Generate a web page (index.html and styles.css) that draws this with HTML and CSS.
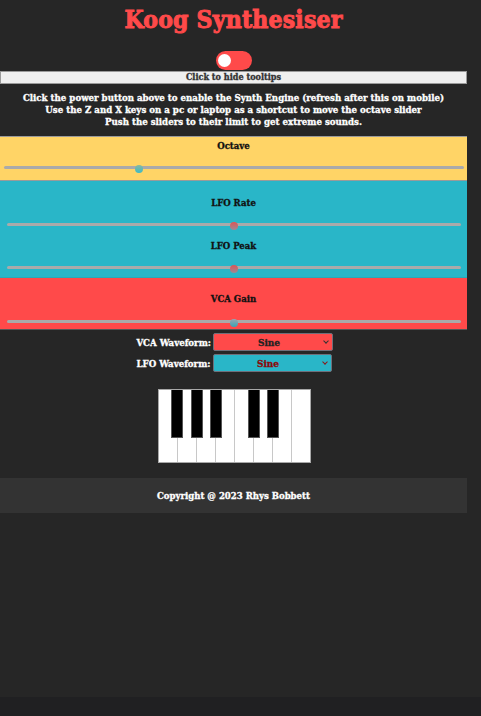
FILE: index.html
```html
<!DOCTYPE html>
<html lang="en">
<head>
<meta charset="utf-8">
<title>Koog Synthesiser</title>
<link rel="stylesheet" href="styles.css">
</head>
<body>
<div class="page">
  <h1 class="title">Koog Synthesiser</h1>
  <div class="power-row">
    <span class="toggle"><span class="knob"></span></span>
  </div>
  <button class="tooltip-btn">Click to hide tooltips</button>
  <div class="instructions">
    <p>Click the power button above to enable the Synth Engine (refresh after this on mobile)</p>
    <p>Use the Z and X keys on a pc or laptop as a shortcut to move the octave slider</p>
    <p>Push the sliders to their limit to get extreme sounds.</p>
  </div>

  <section class="panel octave">
    <div class="label">Octave</div>
    <input class="slider slider-oct" type="range" min="0" max="100" value="29">
  </section>

  <section class="panel lfo">
    <div class="label label-lfo1">LFO Rate</div>
    <input class="slider slider-red s1" type="range" min="0" max="100" value="50">
    <div class="label label-lfo2">LFO Peak</div>
    <input class="slider slider-red s2" type="range" min="0" max="100" value="50">
  </section>

  <section class="panel vca">
    <div class="label label-vca">VCA Gain</div>
    <input class="slider slider-teal" type="range" min="0" max="100" value="50">
  </section>

  <div class="selects">
    <div class="sel-row row1">
      <label class="sel-label">VCA Waveform:</label>
      <span class="sel-wrap sel-red"><select class="sel"><option>Sine</option></select></span>
    </div>
    <div class="sel-row row2">
      <label class="sel-label">LFO Waveform:</label>
      <span class="sel-wrap sel-teal"><select class="sel"><option>Sine</option></select></span>
    </div>
  </div>

  <div class="piano-row">
    <div class="piano">
      <div class="white"></div><div class="white"></div><div class="white"></div><div class="white"></div>
      <div class="white"></div><div class="white"></div><div class="white"></div><div class="white"></div>
      <div class="black b1"></div><div class="black b2"></div><div class="black b3"></div>
      <div class="black b4"></div><div class="black b5"></div>
    </div>
  </div>

  <footer class="footer">Copyright @ 2023 Rhys Bobbett</footer>
</div>
</body>
</html>
```
FILE: styles.css
```css
html {
  background: #202022;
}
body {
  margin: 0;
  background: #262626;
  min-height: 697px;
  font-family: "DejaVu Serif", "Liberation Serif", serif;
  font-weight: bold;
  font-stretch: condensed;
}
.page {
  width: 467px;
  display: flex;
  flex-direction: column;
}
.title {
  margin: 0;
  padding-top: 6px;
  height: 51px;
  box-sizing: border-box;
  text-align: center;
  color: #ff4a4a;
  font-size: 24.5px;
  line-height: 28px;
  letter-spacing: 0.2px;
  -webkit-text-stroke: 0.9px #ff4a4a;
}
.power-row {
  display: flex;
  justify-content: center;
  padding-left: 1px;
  height: 20px;
}
.toggle {
  width: 36px;
  height: 19px;
  border-radius: 10px;
  background: #ff4a4a;
  display: flex;
  align-items: center;
  padding-left: 2px;
  box-sizing: border-box;
}
.knob {
  width: 13px;
  height: 13px;
  border-radius: 50%;
  background: #fff;
}
.tooltip-btn {
  margin: 0;
  width: 467px;
  height: 13px;
  padding: 0;
  border: 1px solid #9a9a9a;
  background: #efefef;
  color: #333;
  font-family: inherit;
  font-weight: bold;
  font-stretch: condensed;
  font-size: 9px;
  line-height: 11px;
  -webkit-text-stroke: 0.3px #333;
}
.instructions {
  padding-top: 8px;
  height: 52px;
  box-sizing: border-box;
  color: #fff;
  text-align: center;
  font-size: 9.6px;
  line-height: 12px;
  -webkit-text-stroke: 0.3px #fff;
}
.instructions p {
  margin: 0;
}
.panel {
  display: flex;
  flex-direction: column;
  align-items: stretch;
  border-top: 1px solid #9a9a9a;
}
.label {
  text-align: center;
  color: #111;
  font-size: 9.5px;
  line-height: 12px;
  -webkit-text-stroke: 0.3px #111;
}
.octave {
  background: #ffd466;
  height: 44px;
  box-sizing: border-box;
  padding-top: 3px;
}
.lfo {
  background: #29b6c8;
  height: 97px;
  box-sizing: border-box;
  padding-top: 16px;
}
.label-lfo2 {
  margin-top: 11px;
}
.vca {
  background: #ff4a4a;
  height: 53px;
  box-sizing: border-box;
  padding-top: 15px;
  border-top: 1px solid #2aa8b8;
  border-bottom: 1px solid #555;
}
.slider {
  -webkit-appearance: none;
  appearance: none;
  background: transparent;
  height: 10px;
  margin: 0;
}
.slider-oct {
  margin: 10px 3px 0 4px;
}
.slider-red, .slider-teal {
  margin: 11px 6px 0 7px;
}
.s1 {
  margin-top: 10px;
}
.s2 {
  margin-top: 10px;
}
.slider::-webkit-slider-runnable-track {
  height: 3px;
  background: #aaaaaa;
  border-radius: 2px;
}
.slider::-webkit-slider-thumb {
  -webkit-appearance: none;
  width: 8px;
  height: 8px;
  border-radius: 50%;
  margin-top: -1px;
}
.slider-oct::-webkit-slider-thumb {
  background: linear-gradient(#8ab8a0, #3bbac6);
}
.slider-red::-webkit-slider-thumb {
  background: linear-gradient(#e05454, #9a8a96);
}
.slider-teal::-webkit-slider-thumb {
  background: linear-gradient(#9aa4b0, #3aa4b4);
}
.selects {
  display: flex;
  flex-direction: column;
  padding-top: 3px;
  gap: 3px;
}
.sel-row {
  display: flex;
  justify-content: center;
  align-items: center;
  gap: 2px;
}
.row1 {
  padding-right: 3px;
}
.row2 {
  padding-right: 5px;
}
.sel-label {
  color: #fff;
  font-size: 9.6px;
  width: 80px;
  text-align: right;
  -webkit-text-stroke: 0.3px #fff;
}
.sel-wrap {
  position: relative;
  display: block;
}
.sel {
  -webkit-appearance: none;
  appearance: none;
  display: block;
  width: 120px;
  height: 18px;
  border: 1px solid #6f6f7a;
  border-radius: 2px;
  font-family: inherit;
  font-weight: bold;
  font-stretch: condensed;
  font-size: 10px;
  text-align: center;
  text-align-last: center;
  padding: 0 8px 0 0;
}
.sel-red .sel {
  background: #ff4a4a;
  color: #222;
  -webkit-text-stroke: 0.3px #222;
}
.sel-teal .sel {
  width: 119px;
  background: #29b6c8;
  color: #8b0a0a;
  -webkit-text-stroke: 0.3px #8b0a0a;
}
.sel-wrap::after {
  content: "";
  position: absolute;
  right: 5px;
  top: 6px;
  width: 3px;
  height: 3px;
  border-right: 1.3px solid #333;
  border-bottom: 1.3px solid #333;
  transform: rotate(45deg);
  pointer-events: none;
}
.sel-teal::after {
  border-color: #8b1a1a;
}
.piano-row {
  display: flex;
  justify-content: center;
  padding-top: 17px;
  padding-bottom: 15px;
  padding-left: 1px;
}
.piano {
  position: relative;
  display: flex;
  height: 74px;
  border: 1px solid #a8a8a8;
  background: #fff;
  width: fit-content;
  box-sizing: border-box;
}
.white {
  width: 18px;
  height: 72px;
  background: #fff;
  border-right: 1px solid #c8c8c8;
}
.white:nth-child(8) {
  border-right: none;
}
.black {
  position: absolute;
  top: 0;
  width: 12px;
  height: 48px;
  background: #000;
  border: 1px solid #555;
  border-top: none;
  box-sizing: border-box;
}
.b1 { left: 12px; }
.b2 { left: 32px; }
.b3 { left: 51px; }
.b4 { left: 89px; }
.b5 { left: 108px; }
.footer {
  height: 35px;
  background: #333;
  color: #fff;
  display: flex;
  justify-content: center;
  align-items: center;
  font-size: 9.5px;
  -webkit-text-stroke: 0.3px #fff;
}
```
